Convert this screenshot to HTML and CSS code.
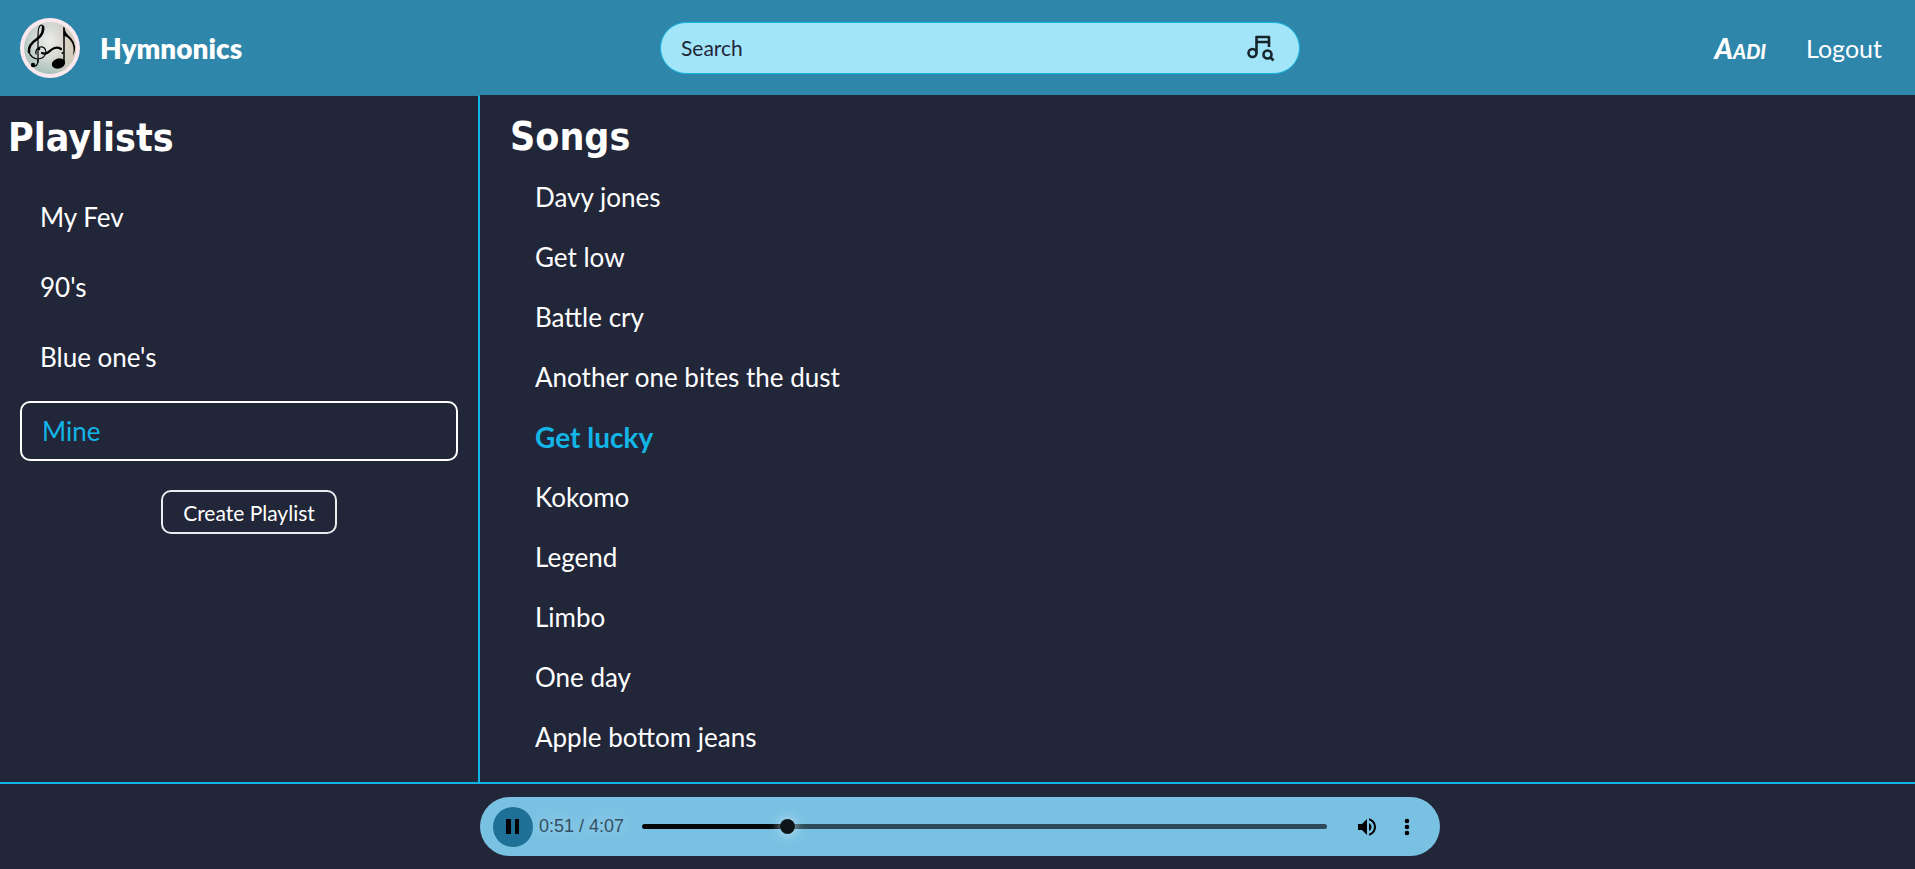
FILE: index.html
```html
<!DOCTYPE html>
<html lang="en">
<head>
<meta charset="utf-8">
<meta name="viewport" content="width=device-width, initial-scale=1">
<title>Hymnonics</title>
<link rel="stylesheet" href="styles.css">
</head>
<body>
<div class="app">
  <header class="topbar">
    <a class="brand" href="#">
      <svg class="logo" viewBox="20 18 60 60" aria-hidden="true">
        <defs>
          <radialGradient id="paper" cx=".52" cy=".38" r=".65">
            <stop offset="0" stop-color="#edeeec"/>
            <stop offset=".5" stop-color="#d3d9d5"/>
            <stop offset="1" stop-color="#a3beb9"/>
          </radialGradient>
          <linearGradient id="warm"><stop offset=".5" stop-color="#d8cdbb" stop-opacity="0"/><stop offset="1" stop-color="#d8cdbb"/></linearGradient>
        </defs>
        <circle cx="50" cy="48" r="30" fill="#fbe8ee"/>
        <circle cx="50" cy="48" r="26" fill="url(#paper)"/>
        <circle cx="50" cy="48" r="26" fill="url(#warm)"/>
        <g fill="none" stroke="#000" stroke-linecap="round">
          <path d="M38 62L38 36Q38 26 41 25Q45 25 43 32Q41 37 35 41" stroke-width="1.2"/>
          <path d="M43 27Q44 34 37 39Q28 45 29 52" stroke-width="2.6"/>
          <path d="M29 52Q31 58 37 59Q45 59 46 52Q45 46 40 47Q35 49 36 54" stroke-width="1.2"/>
          <path d="M38 60Q38 67 33 66" stroke-width="1.2"/>
          <path d="M42 53Q46 55 51 50Q56 46 61 49" stroke-width="2.2"/>
          <path d="M64 28V61" stroke-width="1.5"/>
        </g>
        <circle cx="33" cy="65" r="2.2"/>
        <circle cx="39" cy="49" r="1.3"/>
        <circle cx="62.500" cy="53" r="1"/>
        <ellipse cx="58.500" cy="63.500" rx="6.800" ry="5" transform="rotate(-18 58.500 63.500)"/>
        <path d="M63.500 26Q65 33 71 38Q78 46 73 56Q75 45 70 40Q67 36 63.500 36Z"/>
      </svg>
      <span class="brand-name">Hymnonics</span>
    </a>
    <form class="search" role="search">
      <input class="search-input" type="search" placeholder="Search" aria-label="Search">
      <button class="search-button" type="button" aria-label="Search songs">
        <svg viewBox="0 0 30 30" aria-hidden="true">
          <g fill="none" stroke="#17252b" stroke-width="2.600" stroke-linejoin="round">
            <circle cx="7.500" cy="20" r="4"/>
            <path d="M11.500 20V4H24V14M11.500 9H24"/>
            <circle cx="22.500" cy="21.500" r="4"/>
            <path d="M25.500 24.500L28.500 27.500"/>
          </g>
        </svg>
      </button>
    </form>
    <nav class="account">
      <a class="user" href="#">Aadi</a>
      <a class="logout" href="#">Logout</a>
    </nav>
  </header>

  <div class="content">
    <aside class="sidebar">
      <h1 class="heading">Playlists</h1>
      <ul class="playlists">
        <li><button class="playlist" type="button">My Fev</button></li>
        <li><button class="playlist" type="button">90's</button></li>
        <li><button class="playlist" type="button">Blue one's</button></li>
        <li><button class="playlist playlist-active" type="button">Mine</button></li>
      </ul>
      <button class="create" type="button">Create Playlist</button>
    </aside>
    <main class="songs">
      <h1 class="heading">Songs</h1>
      <ul class="song-list">
        <li><button class="song" type="button">Davy jones</button></li>
        <li><button class="song" type="button">Get low</button></li>
        <li><button class="song" type="button">Battle cry</button></li>
        <li><button class="song" type="button">Another one bites the dust</button></li>
        <li><button class="song song-active" type="button">Get lucky</button></li>
        <li><button class="song" type="button">Kokomo</button></li>
        <li><button class="song" type="button">Legend</button></li>
        <li><button class="song" type="button">Limbo</button></li>
        <li><button class="song" type="button">One day</button></li>
        <li><button class="song" type="button">Apple bottom jeans</button></li>
      </ul>
    </main>
  </div>

  <footer class="player-bar">
    <div class="player">
      <button class="pause" type="button" aria-label="Pause">
        <svg viewBox="0 0 40 40" aria-hidden="true"><path d="M13 12h5v15h-5zM22 12h4v15h-4z"/></svg>
      </button>
      <span class="time">0:51 / 4:07</span>
      <input class="seek" type="range" min="0" max="247" value="51" aria-label="Seek">
      <button class="control" type="button" aria-label="Mute">
        <svg viewBox="0 0 24 24" aria-hidden="true"><path d="M3 9v6h4l5 5V4L7 9H3zm13.500 3c0-1.770-1.020-3.290-2.500-4.030v8.050c1.480-.73 2.500-2.250 2.500-4.020zM14 3.230v2.060c2.890.86 5 3.540 5 6.710s-2.110 5.850-5 6.710v2.060c4.010-.91 7-4.490 7-8.770s-2.990-7.860-7-8.770z"/></svg>
      </button>
      <button class="control" type="button" aria-label="More options">
        <svg viewBox="0 0 24 24" aria-hidden="true"><circle cx="12" cy="6" r="2.300"/><circle cx="12" cy="12" r="2.300"/><circle cx="12" cy="18" r="2.300"/></svg>
      </button>
    </div>
  </footer>
</div>
</body>
</html>
```
FILE: styles.css
```css
* { box-sizing: border-box; }

body {
  margin: 0;
  background: #222639;
  color: #fff;
  font-family: Lato, "Open Sans", sans-serif;
}

button {
  border: 0;
  padding: 0;
  background: none;
  color: inherit;
  font: inherit;
  cursor: pointer;
}

a { color: inherit; text-decoration: none; }
ul { margin: 0; padding: 0; list-style: none; }
svg { display: block; }

.app {
  display: flex;
  flex-direction: column;
  min-height: 100vh;
}

.topbar {
  display: flex;
  align-items: center;
  justify-content: space-between;
  height: 95px;
  padding: 0 33px 0 20px;
  background: #2e86ab;
}

.brand { display: flex; flex: 1; align-items: center; gap: 20px; }
.logo { width: 60px; height: 60px; }
.brand-name { font-size: 28px; font-weight: 800; }

.search {
  display: flex;
  align-items: center;
  width: 640px;
  height: 52px;
  margin-left: 58px;
  padding: 0 24px 0 20px;
  border: 1px solid #13b5e6;
  border-radius: 26px;
  background: #a2e5f8;
}

.search-input {
  flex: 1;
  min-width: 0;
  border: 0;
  padding: 0;
  outline: 0;
  background: none;
  color: #222639;
  font: 21px Lato, "Open Sans", sans-serif;
}

.search-input::placeholder { color: #222639; opacity: 1; }
.search-button { width: 30px; height: 30px; }

.account {
  display: flex;
  flex: 1;
  align-items: center;
  justify-content: flex-end;
  gap: 40px;
  font-size: 25px;
}

.user {
  font-size: 28px;
  font-style: italic;
  font-variant: small-caps;
  font-weight: 900;
}

.content { display: flex; flex: 1; }

.sidebar {
  display: flex;
  flex-direction: column;
  width: 480px;
  padding-top: 17px;
  border-top: 1px solid #2e86ab;
  border-right: 2px solid #13b5e6;
}

.heading {
  margin: 0;
  font-family: "DejaVu Sans Condensed", "DejaVu Sans", sans-serif;
  font-size: 39px;
  font-weight: 700;
  line-height: 50px;
}

.sidebar .heading { padding-left: 8px; }

.playlists {
  display: flex;
  flex-direction: column;
  gap: 10px;
  padding: 24px 20px 0;
}

.playlist {
  display: block;
  width: 100%;
  height: 60px;
  padding: 0 20px;
  font-size: 26px;
  text-align: left;
}

.playlist-active {
  margin-top: 4px;
  border: 2px solid #fff;
  border-radius: 10px;
  color: #13b5e6;
}

.create {
  align-self: center;
  height: 44px;
  margin: 29px 0 0 20px;
  padding: 0 20px;
  border: 2px solid #ebecef;
  border-radius: 10px;
  font-size: 21px;
}

.songs { flex: 1; padding: 17px 30px 8px; }
.song-list { padding: 5px 0 0 25px; }

.song {
  display: block;
  height: 60px;
  font-size: 26px;
}

.song-active { color: #13b5e6; font-size: 28px; font-weight: 700; }

.player-bar {
  padding: 13px 0;
  border-top: 2px solid #13b5e6;
}

.player {
  display: flex;
  align-items: center;
  width: 960px;
  height: 59px;
  margin-left: 480px;
  padding: 0 21px 0 13px;
  border-radius: 30px;
  background: #79c1e3;
}

.pause {
  width: 40px;
  height: 40px;
  border-radius: 50%;
  background: #1f7096;
}

.time {
  margin: 0 18px 0 6px;
  color: #354e61;
  font: 18px "Liberation Sans", Arial, sans-serif;
  text-shadow: 0 0 12px #b5daeb;
}

.seek {
  flex: 1;
  min-width: 0;
  height: 15px;
  margin: 0 28px 0 0;
  appearance: none;
  background: none;
}

.seek::-webkit-slider-runnable-track {
  height: 5px;
  border-radius: 3px;
  background: linear-gradient(to right, #050809 21%, #2e4a58 21%);
}

.seek::-webkit-slider-thumb {
  width: 15px;
  height: 15px;
  margin-top: -5px;
  appearance: none;
  border-radius: 50%;
  background: #0d1519;
  box-shadow: 0 0 12px #d3eaf4;
}

.control { width: 24px; height: 24px; }
.control + .control { margin-left: 16px; }
```
